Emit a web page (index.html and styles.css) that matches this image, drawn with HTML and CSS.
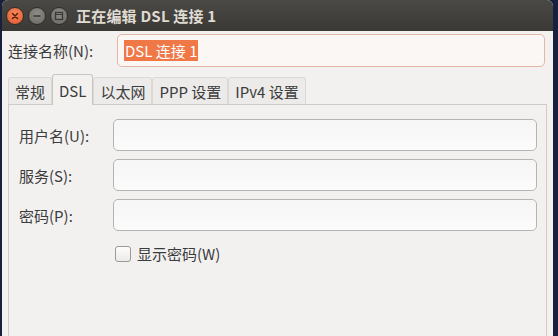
FILE: index.html
```html
<!DOCTYPE html>
<html lang="zh-CN">
<head>
<meta charset="utf-8">
<title>正在编辑 DSL 连接 1</title>
<link rel="stylesheet" href="styles.css">
</head>
<body>
<div class="window">
  <div class="titlebar">
    <div class="wbtns">
      <span class="wbtn close"><svg width="10" height="10" viewBox="0 0 10 10"><path d="M2.5 2.5L7.5 7.5M7.5 2.5L2.5 7.5" stroke="#5a1d0a" stroke-width="1.5" stroke-linecap="round"/></svg></span>
      <span class="wbtn"><svg width="10" height="10" viewBox="0 0 10 10"><path d="M1.5 5H8.5" stroke="#3a3935" stroke-width="1.6"/></svg></span>
      <span class="wbtn"><svg width="10" height="10" viewBox="0 0 10 10"><rect x="1.5" y="1.5" width="7" height="7" fill="none" stroke="#3a3935" stroke-width="1.3"/><path d="M1.5 3.5H8.5" stroke="#3a3935" stroke-width="1"/></svg></span>
    </div>
    <div class="title">正在编辑 DSL 连接 1</div>
  </div>
  <div class="content">
    <div class="namerow">
      <label class="namelabel">连接名称(N):</label>
      <div class="entry focused"><span class="sel">DSL 连接 1</span></div>
    </div>
    <div class="tabs">
      <div class="tab">常规</div>
      <div class="tab active">DSL</div>
      <div class="tab">以太网</div>
      <div class="tab">PPP 设置</div>
      <div class="tab">IPv4 设置</div>
    </div>
    <div class="panel">
      <div class="form">
        <label class="flabel">用户名(U):</label>
        <div class="entry field"></div>
        <label class="flabel">服务(S):</label>
        <div class="entry field"></div>
        <label class="flabel">密码(P):</label>
        <div class="entry field"></div>
        <div></div>
        <div class="check"><span class="box"></span><span>显示密码(W)</span></div>
      </div>
    </div>
  </div>
</div>
</body>
</html>
```
FILE: styles.css
```css
html, body {
  margin: 0;
  padding: 0;
  height: 100%;
}
body {
  background: #17213d;
  font-family: "Noto Sans CJK SC", "Noto Sans", sans-serif;
  font-size: 15px;
  color: #3c3c3c;
  overflow: hidden;
}
.window {
  margin-left: 2px;
  width: 551px;
  height: 336px;
  background: #f2f1f0;
  border-radius: 6px 6px 0 0;
  overflow: hidden;
  display: flex;
  flex-direction: column;
}
.titlebar {
  height: 31px;
  flex: none;
  background: linear-gradient(#4a4945, #3a3935);
  display: flex;
  align-items: center;
  padding-left: 4px;
}
.wbtns {
  display: flex;
  gap: 4px;
}
.wbtn {
  width: 16px;
  height: 16px;
  border-radius: 50%;
  background: radial-gradient(circle at 50% 35%, #8e8c86, #6a6863);
  border: 1px solid #2f2e2b;
  display: flex;
  align-items: center;
  justify-content: center;
}
.wbtn.close {
  background: radial-gradient(circle at 50% 35%, #f88a5e, #e0552b);
}
.title {
  margin-left: 8px;
  color: #dfdbd2;
  font-weight: bold;
  font-size: 15px;
  letter-spacing: 0.2px;
}
.content {
  flex: 1;
  padding: 3px 5px 0 5px;
  display: flex;
  flex-direction: column;
}
.namerow {
  display: flex;
  align-items: center;
  height: 33px;
}
.namelabel {
  width: 109px;
  padding-left: 1px;
}
.entry {
  background: linear-gradient(#f6f6f6, #fbfbfb);
  border: 1px solid #b6b4b0;
  border-radius: 5px;
  box-sizing: border-box;
}
.entry.focused {
  flex: 1;
  height: 33px;
  border-color: #e3b6a7;
  background: #fbf7f5;
  display: flex;
  align-items: center;
  padding-left: 6px;
  margin-right: 3px;
}
.sel {
  background: #f07746;
  color: #ffffff;
  padding: 0 1px;
  line-height: 21px;
}
.tabs {
  display: flex;
  margin-top: 6px;
  height: 31px;
  align-items: flex-end;
  padding-left: 1px;
}
.tab {
  height: 27px;
  box-sizing: border-box;
  padding: 0 6px;
  display: flex;
  align-items: center;
  border: 1px solid #dcd9d4;
  border-bottom: none;
  border-radius: 3px 3px 0 0;
  background: #ecebe9;
  color: #3c3c3c;
}
.tab.active {
  height: 31px;
  background: #f2f1f0;
  border-color: #c9c6c1;
  margin-bottom: -1px;
  position: relative;
  z-index: 1;
}
.panel {
  flex: 1;
  border: 1px solid #cfccc7;
  border-bottom: none;
  margin-left: 1px;
  margin-right: 1px;
  padding: 14px 10px 0 10px;
}
.form {
  display: grid;
  grid-template-columns: 94px 424px;
  row-gap: 8px;
  align-items: center;
}
.field {
  height: 32px;
}
.check {
  display: flex;
  align-items: center;
  gap: 6px;
  margin-top: 4px;
  padding-left: 2px;
}
.box {
  width: 16px;
  height: 16px;
  box-sizing: border-box;
  border: 1px solid #9d9a95;
  border-radius: 3px;
  background: linear-gradient(#fdfdfd, #ebeae8);
}
```
